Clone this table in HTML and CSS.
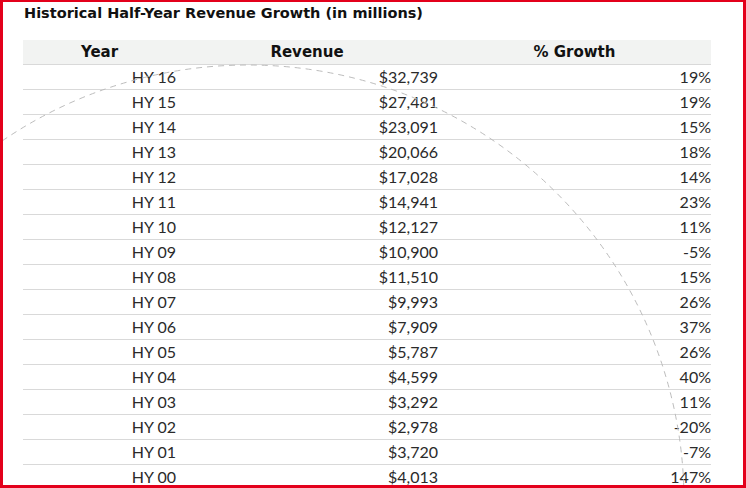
FILE: index.html
```html
<!DOCTYPE html>
<html>
<head>
<meta charset="utf-8">
<link rel="stylesheet" href="styles.css">
</head>
<body>
<div class="frame">
  <h1 class="title">Historical Half-Year Revenue Growth (in millions)</h1>
  <div class="table">
    <div class="row head"><div>Year</div><div>Revenue</div><div>% Growth</div></div>
    <div class="row"><div>HY 16</div><div>$32,739</div><div>19%</div></div>
    <div class="row"><div>HY 15</div><div>$27,481</div><div>19%</div></div>
    <div class="row"><div>HY 14</div><div>$23,091</div><div>15%</div></div>
    <div class="row"><div>HY 13</div><div>$20,066</div><div>18%</div></div>
    <div class="row"><div>HY 12</div><div>$17,028</div><div>14%</div></div>
    <div class="row"><div>HY 11</div><div>$14,941</div><div>23%</div></div>
    <div class="row"><div>HY 10</div><div>$12,127</div><div>11%</div></div>
    <div class="row"><div>HY 09</div><div>$10,900</div><div>-5%</div></div>
    <div class="row"><div>HY 08</div><div>$11,510</div><div>15%</div></div>
    <div class="row"><div>HY 07</div><div>$9,993</div><div>26%</div></div>
    <div class="row"><div>HY 06</div><div>$7,909</div><div>37%</div></div>
    <div class="row"><div>HY 05</div><div>$5,787</div><div>26%</div></div>
    <div class="row"><div>HY 04</div><div>$4,599</div><div>40%</div></div>
    <div class="row"><div>HY 03</div><div>$3,292</div><div>11%</div></div>
    <div class="row"><div>HY 02</div><div>$2,978</div><div>-20%</div></div>
    <div class="row"><div>HY 01</div><div>$3,720</div><div>-7%</div></div>
    <div class="row"><div>HY 00</div><div>$4,013</div><div>147%</div></div>
  </div>
  <svg class="arc" width="746" height="488" viewBox="0 0 746 488">
    <circle cx="248" cy="501" r="436" fill="none" stroke="#bdbdbd" stroke-width="1" stroke-dasharray="6 5"/>
  </svg>
</div>
</body>
</html>
```

FILE: styles.css
```css
html, body {
  margin: 0;
  padding: 0;
  background: #ffffff;
}
.frame {
  position: relative;
  width: 746px;
  height: 488px;
  box-sizing: border-box;
  border: 3px solid #e3001b;
  border-top-width: 2px;
  overflow: hidden;
  font-family: "Lato", "Liberation Sans", sans-serif;
}
.title {
  margin: 0;
  padding: 3px 0 0 21px;
  height: 38px;
  box-sizing: border-box;
  font-family: "DejaVu Sans", "Liberation Sans", sans-serif;
  font-size: 14.5px;
  font-weight: 700;
  color: #111;
}
.table {
  margin-left: 20px;
  width: 688px;
}
.row {
  display: grid;
  grid-template-columns: 153px 262px 273px;
  height: 25px;
  box-sizing: border-box;
  border-bottom: 1px solid #d9d9d9;
  align-items: center;
  font-size: 16px;
  color: #2a2a2a;
}
.row > div {
  text-align: right;
  line-height: 24px;
}
.row.head {
  background: #f2f3f2;
  font-family: "DejaVu Sans", "Liberation Sans", sans-serif;
  font-weight: 700;
  color: #111;
  font-size: 15px;
}
.row.head > div {
  text-align: center;
}
.arc {
  position: absolute;
  left: -3px;
  top: -2px;
  pointer-events: none;
}
```
